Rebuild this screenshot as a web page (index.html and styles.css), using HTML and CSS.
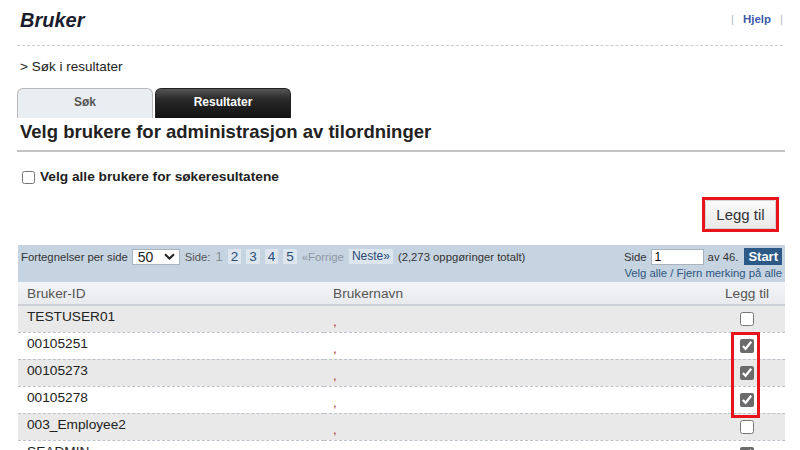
FILE: index.html
```html
<!DOCTYPE html>
<html lang="no">
<head>
  <meta charset="UTF-8" />
  <meta name="viewport" content="width=device-width, initial-scale=1" />
  <title>Bruker</title>
  <link rel="stylesheet" href="styles.css">
</head>
<body>
  <div class="page">

    <!-- Header -->
    <div class="top-bar">
      <h1>Bruker</h1>
      <div class="help-links">
        <span class="sep">|</span>
        <a href="#">Hjelp</a>
        <span class="sep">|</span>
      </div>
    </div>

    <div class="breadcrumb">&gt; Søk i resultater</div>

    <!-- Tabs -->
    <div class="tabs">
      <div class="tab">Søk</div>
      <div class="tab active">Resultater</div>
    </div>

    <h2 class="section-title">Velg brukere for administrasjon av tilordninger</h2>

    <label class="select-all">
      <input type="checkbox">
      Velg alle brukere for søkeresultatene
    </label>

    <div class="actions">
      <div class="mark">
        <button class="btn">Legg til</button>
      </div>
    </div>

    <div class="results">
      <div class="pager">
        <div class="pager-left">
          <span>Fortegnelser per side</span>
          <span class="fake-select">50
            <svg width="11" height="7" viewBox="0 0 11 7"><path d="M1 1.2 L5.5 5.5 L10 1.2" fill="none" stroke="#222" stroke-width="2"/></svg>
          </span>
          <span class="muted">Side:</span>
          <span class="current">1</span>
          <span class="pg">2</span>
          <span class="pg">3</span>
          <span class="pg">4</span>
          <span class="pg">5</span>
          <span class="prev">«Forrige</span>
          <span class="pg next">Neste»</span>
          <span>(2,273 oppgøringer totalt)</span>
        </div>
        <div class="pager-right">
          <div class="goto">
            <span>Side</span>
            <input type="text" value="1">
            <span>av 46.</span>
            <button class="start">Start</button>
          </div>
          <div class="select-links">Velg alle / Fjern merking på alle</div>
        </div>
      </div>

      <table class="users">
        <thead>
          <tr>
            <th class="col-id">Bruker-ID</th>
            <th>Brukernavn</th>
            <th class="col-add">Legg til</th>
          </tr>
        </thead>
        <tbody>
          <tr>
            <td>TESTUSER01</td>
            <td><span class="name">,</span></td>
            <td class="col-add"><input type="checkbox"></td>
          </tr>
          <tr>
            <td>00105251</td>
            <td><span class="name">,</span></td>
            <td class="col-add"><input type="checkbox" checked></td>
          </tr>
          <tr>
            <td>00105273</td>
            <td><span class="name">,</span></td>
            <td class="col-add"><input type="checkbox" checked></td>
          </tr>
          <tr>
            <td>00105278</td>
            <td><span class="name">,</span></td>
            <td class="col-add"><input type="checkbox" checked></td>
          </tr>
          <tr>
            <td>003_Employee2</td>
            <td><span class="name">,</span></td>
            <td class="col-add"><input type="checkbox"></td>
          </tr>
          <tr>
            <td>SEADMIN</td>
            <td><span class="name">,</span></td>
            <td class="col-add"><input type="checkbox" checked></td>
          </tr>
        </tbody>
      </table>

      <div class="mark-rows"></div>
    </div>

  </div>
</body>
</html>
```

FILE: styles.css
```css
html {
  overflow: hidden;
}

body {
  font-family: "Liberation Sans", Arial, sans-serif;
  margin: 0;
  background: #fff;
  color: #222;
}

.page {
  padding: 8px 15px 0 17px;
}

.top-bar {
  display: flex;
  justify-content: space-between;
  align-items: flex-start;
  padding: 0 0 13px 3px;
  margin-right: 2px;
  border-bottom: 1px dashed #c9cdd3;
}

h1 {
  margin: 0;
  font-size: 20px;
  line-height: 24px;
  font-style: italic;
  font-weight: bold;
  color: #1b1d2e;
}

.help-links {
  display: flex;
  gap: 9px;
  font-size: 11.5px;
  line-height: 14px;
  padding-top: 4px;
}

.help-links a {
  color: #3e5aa6;
  font-weight: bold;
  text-decoration: none;
}

.help-links .sep {
  color: #b5b9c2;
}

.breadcrumb {
  font-size: 13.5px;
  line-height: 16px;
  margin: 13px 0 0 3px;
  color: #222;
}

.tabs {
  display: flex;
  gap: 2px;
  margin-top: 13px;
}

.tab {
  width: 136px;
  height: 30px;
  box-sizing: border-box;
  border: 1px solid #b7b9bc;
  border-bottom: none;
  border-radius: 6px 6px 0 0;
  background: #e9eef3;
  color: #555;
  font-size: 12px;
  font-weight: bold;
  text-align: center;
  line-height: 27px;
}

.tab.active {
  background: linear-gradient(#555 0%, #2a2a2a 35%, #111 100%);
  border-color: #222;
  color: #fff;
}

.section-title {
  margin: 0;
  padding: 3px 0 7px 3px;
  font-size: 18.5px;
  line-height: 22px;
  color: #222;
  border-bottom: 2px solid #c4c4c4;
}

.select-all {
  display: flex;
  align-items: center;
  margin: 17px 0 0 1px;
  font-size: 13.7px;
  line-height: 16px;
  font-weight: bold;
  color: #222;
}

.select-all input {
  margin: 0 5px 0 4px;
  width: 13px;
  height: 13px;
}

.actions {
  display: flex;
  justify-content: flex-end;
  margin: 12px 6px 0 0;
}

.mark {
  border: 3px solid #e8141b;
}

.btn {
  display: block;
  width: 71px;
  height: 29px;
  border: 1px solid #d2d2d2;
  border-radius: 2px;
  background: linear-gradient(#fbfbfb, #e9e9e9);
  font-family: inherit;
  font-size: 15px;
  color: #333;
  cursor: pointer;
}

.results {
  position: relative;
  margin-top: 13px;
  margin-left: 1px;
}

.pager {
  display: flex;
  justify-content: space-between;
  align-items: flex-start;
  height: 37px;
  box-sizing: border-box;
  padding: 3px 3px 0 3px;
  background: #c6d4e1;
  font-size: 11.3px;
  color: #333;
}

.pager-left {
  display: flex;
  align-items: center;
  gap: 5px;
  height: 17px;
}

.fake-select {
  display: inline-flex;
  align-items: center;
  justify-content: space-between;
  width: 48px;
  height: 16px;
  box-sizing: border-box;
  padding: 0 4px 0 5px;
  margin-left: -1px;
  background: #fff;
  border: 1px solid #a9b3bd;
  font-size: 14px;
  color: #222;
}

.muted {
  color: #555;
}

.current {
  color: #8a8f96;
  font-size: 13px;
}

.pg {
  background: #dde6ee;
  color: #2b4c75;
  font-size: 13.5px;
  padding: 0 3px;
  line-height: 15px;
}

.pg.next {
  font-size: 12px;
}

.prev {
  color: #8d96a3;
}

.pager-right {
  display: flex;
  flex-direction: column;
  align-items: flex-end;
}

.goto {
  display: flex;
  align-items: center;
  gap: 4px;
  height: 17px;
}

.goto input {
  width: 53px;
  height: 16px;
  box-sizing: border-box;
  border: 1px solid #a9b3bd;
  padding: 0 3px;
  font-family: inherit;
  font-size: 12px;
}

.start {
  height: 17px;
  padding: 0 4px;
  margin-left: 2px;
  border: none;
  background: #2c5985;
  color: #fff;
  font-family: inherit;
  font-size: 13px;
  font-weight: bold;
}

.select-links {
  color: #2f5580;
  line-height: 14px;
  margin-top: 1px;
}

table.users {
  width: 100%;
  border-collapse: collapse;
  font-size: 13.7px;
}

.users th {
  height: 22px;
  padding: 0 9px;
  text-align: left;
  font-weight: normal;
  color: #555;
  background: linear-gradient(#f4f5f7, #e8eaed);
  border-bottom: 2px solid #ccd0d5;
}

.users th.col-id {
  width: 288px;
}

.users td {
  height: 27px;
  box-sizing: border-box;
  padding: 2px 9px 0;
  vertical-align: top;
  line-height: 18px;
  color: #222;
  border-bottom: 1px dashed #bcc3cb;
}

.users tbody tr:nth-child(odd) td {
  background: #e9e9e9;
}

.users .col-add {
  width: 58px;
  text-align: center;
}

.users td.col-add {
  padding-top: 6px;
}

.users input[type="checkbox"] {
  display: inline-block;
  margin: 0;
  width: 14px;
  height: 14px;
  vertical-align: top;
  accent-color: #6b6b6b;
}

.name {
  color: #b83a3a;
  position: relative;
  top: 5px;
}

.mark-rows {
  position: absolute;
  left: 713px;
  top: 87px;
  width: 23px;
  height: 80px;
  border: 3px solid #e8141b;
}
```
